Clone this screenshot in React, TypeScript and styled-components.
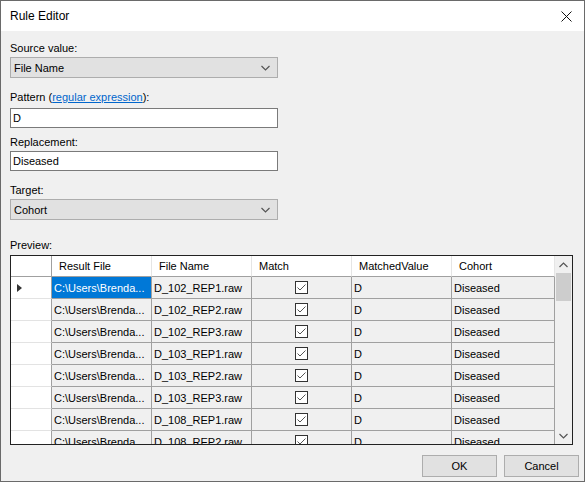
import React from "react";
import styled, { createGlobalStyle } from "styled-components";

const GlobalStyle = createGlobalStyle`
  html, body {
    margin: 0;
    padding: 0;
    background: #f0f0f0;
  }
  body {
    font-family: "Liberation Sans", Arial, sans-serif;
    font-size: 11px;
    color: #000;
  }
`;

interface IRow {
  resultFile: string;
  fileName: string;
  match: boolean;
  matchedValue: string;
  cohort: string;
}

const rows: IRow[] = [
  "D_102_REP1.raw",
  "D_102_REP2.raw",
  "D_102_REP3.raw",
  "D_103_REP1.raw",
  "D_103_REP2.raw",
  "D_103_REP3.raw",
  "D_108_REP1.raw",
  "D_108_REP2.raw",
].map((fileName) => ({
  resultFile: "C:\\Users\\Brenda...",
  fileName,
  match: true,
  matchedValue: "D",
  cohort: "Diseased",
}));

const columns = ["Result File", "File Name", "Match", "MatchedValue", "Cohort"];

const Chevron = ({ up }: { up?: boolean }) => (
  <svg width="9" height="6" viewBox="0 0 9 6">
    <path
      d={up ? "M0.5 5 L4.5 1 L8.5 5" : "M0.5 1 L4.5 5 L8.5 1"}
      fill="none"
      stroke="#555"
      strokeWidth="1.2"
    />
  </svg>
);

const CheckBox = () => (
  <CheckBoxFrame>
    <svg width="11" height="11" viewBox="0 0 11 11">
      <path d="M1.5 5.5 L4 8 L9.5 2.5" fill="none" stroke="#555" strokeWidth="1" />
    </svg>
  </CheckBoxFrame>
);

const App: React.FC = () => {
  return (
    <>
      <GlobalStyle />
      <Window>
        <TitleBar>
          <Title>Rule Editor</Title>
          <svg width="11" height="11" viewBox="0 0 11 11">
            <path d="M0.5 0.5 L10.5 10.5 M10.5 0.5 L0.5 10.5" stroke="#111" strokeWidth="1" />
          </svg>
        </TitleBar>
        <Body>
          <Label $top={0}>Source value:</Label>
          <Combo>
            <span>File Name</span>
            <Chevron />
          </Combo>

          <Label $top={12} $bottom={3}>
            Pattern (<Link>regular expression</Link>):
          </Label>
          <TextBox>D</TextBox>

          <Label $top={7}>Replacement:</Label>
          <TextBox>Diseased</TextBox>

          <Label $top={12}>Target:</Label>
          <Combo>
            <span>Cohort</span>
            <Chevron />
          </Combo>

          <Label $top={18}>Preview:</Label>
          <Grid>
            <Table>
              <HeaderCell $rowHead />
              {columns.map((c) => (
                <HeaderCell key={c}>{c}</HeaderCell>
              ))}
              {rows.map((r, i) => (
                <React.Fragment key={r.fileName}>
                  <RowHead>{i === 0 && <Arrow />}</RowHead>
                  <Cell $selected={i === 0}>{r.resultFile}</Cell>
                  <Cell>{r.fileName}</Cell>
                  <Cell $center>{r.match && <CheckBox />}</Cell>
                  <Cell>{r.matchedValue}</Cell>
                  <Cell>{r.cohort}</Cell>
                </React.Fragment>
              ))}
            </Table>
            <ScrollBar>
              <ScrollButton>
                <Chevron up />
              </ScrollButton>
              <Thumb />
              <ScrollTrack />
              <ScrollButton>
                <Chevron />
              </ScrollButton>
            </ScrollBar>
          </Grid>

          <Footer>
            <Button>OK</Button>
            <Button>Cancel</Button>
          </Footer>
        </Body>
      </Window>
    </>
  );
};

export default App;

const Window = styled.div`
  width: 585px;
  height: 482px;
  box-sizing: border-box;
  border: 1px solid #6a6a6a;
  background: #f0f0f0;
  display: flex;
  flex-direction: column;
`;

const TitleBar = styled.div`
  height: 30px;
  background: #fff;
  display: flex;
  align-items: center;
  justify-content: space-between;
  padding: 0 12px 0 9px;
  flex-shrink: 0;
`;

const Title = styled.div`
  font-size: 12px;
`;

const Body = styled.div`
  flex: 1;
  display: flex;
  flex-direction: column;
  padding: 10px 5px 0 9px;
`;

const Label = styled.div<{ $top: number; $bottom?: number }>`
  margin-top: ${({ $top }) => $top}px;
  margin-bottom: ${({ $bottom }) => $bottom ?? 1}px;
  line-height: 15px;
`;

const Link = styled.span`
  color: #0066cc;
  text-decoration: underline;
`;

const Combo = styled.div`
  width: 268px;
  height: 21px;
  box-sizing: border-box;
  background: #e1e1e1;
  border: 1px solid #adadad;
  display: flex;
  align-items: center;
  justify-content: space-between;
  padding: 0 7px 0 3px;
`;

const TextBox = styled.div`
  width: 268px;
  height: 20px;
  box-sizing: border-box;
  background: #fff;
  border: 1px solid #7a7a7a;
  display: flex;
  align-items: center;
  padding: 0 2px;
`;

const Grid = styled.div`
  margin-top: 1px;
  width: 563px;
  height: 190px;
  box-sizing: border-box;
  border: 1px solid #222;
  display: flex;
  overflow: hidden;
  background: #f0f0f0;
`;

const Table = styled.div`
  flex: 1;
  display: grid;
  grid-template-columns: 41px 100px 100px 100px 100px 1fr;
  grid-auto-rows: 22px;
  grid-template-rows: 21px;
  align-content: start;
  overflow: hidden;
`;

const HeaderCell = styled.div<{ $rowHead?: boolean }>`
  background: #fff;
  border-right: 1px solid ${({ $rowHead }) => ($rowHead ? "#a0a0a0" : "#e5e5e5")};
  border-bottom: 1px solid #a0a0a0;
  display: flex;
  align-items: center;
  padding-left: 7px;
  white-space: nowrap;
`;

const RowHead = styled.div`
  background: #fff;
  border-right: 1px solid #a0a0a0;
  border-bottom: 1px solid #e3e3e3;
  display: flex;
  align-items: center;
  padding-left: 6px;
`;

const Arrow = styled.div`
  width: 0;
  height: 0;
  border-top: 4px solid transparent;
  border-bottom: 4px solid transparent;
  border-left: 5px solid #333;
`;

const Cell = styled.div<{ $selected?: boolean; $center?: boolean }>`
  background: ${({ $selected }) => ($selected ? "#0078d7" : "#f0f0f0")};
  color: ${({ $selected }) => ($selected ? "#fff" : "#000")};
  border-right: 1px solid #a0a0a0;
  border-bottom: 1px solid #a0a0a0;
  display: flex;
  align-items: center;
  justify-content: ${({ $center }) => ($center ? "center" : "flex-start")};
  padding-left: ${({ $center }) => ($center ? 0 : 2)}px;
  white-space: nowrap;
  overflow: hidden;
`;

const CheckBoxFrame = styled.div`
  width: 13px;
  height: 13px;
  box-sizing: border-box;
  border: 1px solid #333;
  background: #fff;
  display: flex;
  align-items: center;
  justify-content: center;
`;

const ScrollBar = styled.div`
  width: 17px;
  flex-shrink: 0;
  background: #f0f0f0;
  display: flex;
  flex-direction: column;
`;

const ScrollButton = styled.div`
  height: 17px;
  display: flex;
  align-items: center;
  justify-content: center;
`;

const Thumb = styled.div`
  height: 28px;
  margin: 0 1px;
  background: #cdcdcd;
`;

const ScrollTrack = styled.div`
  flex: 1;
`;

const Footer = styled.div`
  display: flex;
  justify-content: flex-end;
  gap: 7px;
  margin-top: 10px;
`;

const Button = styled.div`
  width: 75px;
  height: 22px;
  box-sizing: border-box;
  background: #e1e1e1;
  border: 1px solid #adadad;
  display: flex;
  align-items: center;
  justify-content: center;
`;
